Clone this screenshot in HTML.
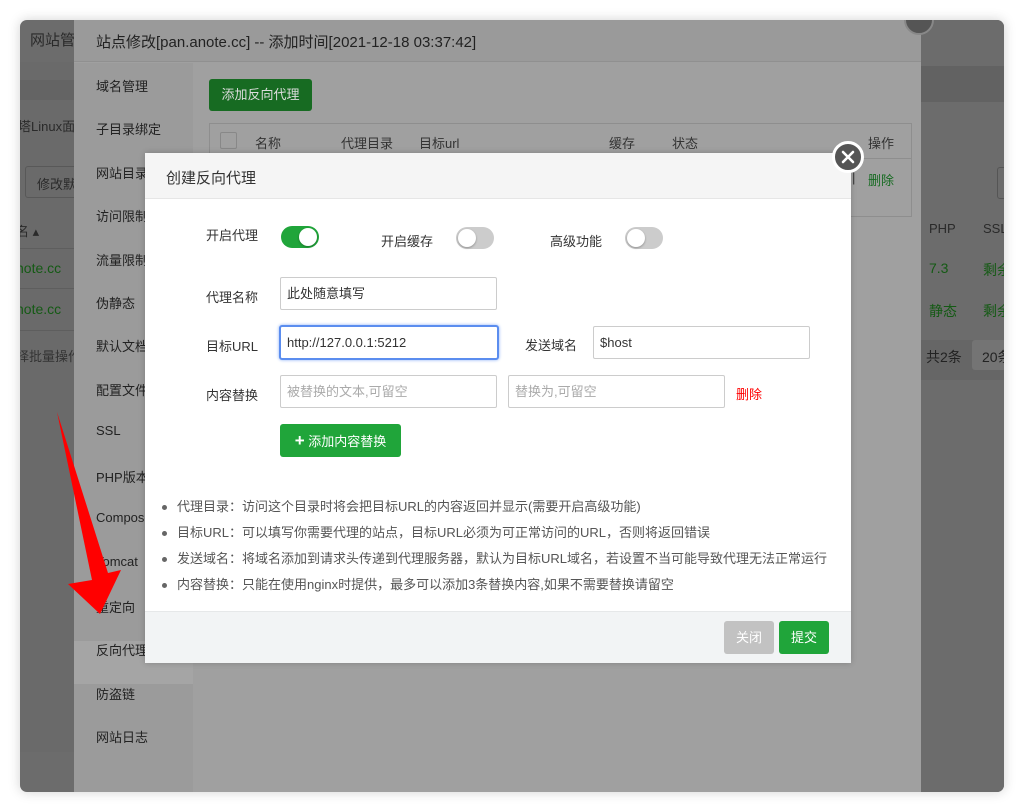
<!DOCTYPE html>
<html><head><meta charset="utf-8"><style>
*{box-sizing:border-box;margin:0;padding:0}
body{width:1024px;height:812px;background:#fff;position:relative;overflow:hidden;font-family:"Liberation Sans","Noto Sans CJK SC",sans-serif;font-size:13px;color:#333}
.abs{position:absolute}
.win{left:20px;top:20px;width:984px;height:772px;border-radius:7px;overflow:hidden;background:#6c6c6c;box-shadow:0 0 12px rgba(0,0,0,.18)}
.t{position:absolute;white-space:nowrap}
.inp{position:absolute;height:33px;border:1px solid #ccc;background:#fff;border-radius:2px;padding-left:6px;line-height:31px;font-size:13px;color:#333}
.lab{position:absolute;font-size:13px;color:#333;white-space:nowrap}
.sw{position:absolute;width:38px;height:22px;border-radius:11px;background:#ccc}
.sw i{position:absolute;top:2px;left:2px;width:18px;height:18px;border-radius:50%;background:#fff;box-shadow:0 1px 2px rgba(0,0,0,.3)}
.sw.on{background:#20a53a}.sw.on i{left:18px}
.btn{position:absolute;color:#fff;font-size:13px;text-align:center;border-radius:3px}
li{list-style:none;position:relative;padding-left:17px;height:26px;line-height:26px;font-size:13px;color:#555}
li:before{content:"";position:absolute;left:2px;top:11px;width:5px;height:5px;border-radius:50%;background:#666}
</style></head><body>
<div class="abs win">
  <div class="t" style="left:10px;top:9px;font-size:15px;color:#2a2a2a">网站管</div>
  <div class="abs" style="left:0;top:42px;width:54px;height:690px;background:#6a6a6a"></div>
  <div class="abs" style="left:0;top:60px;width:54px;height:20px;background:#646464"></div>
  <div class="t" style="left:-2px;top:96px;color:#2a2a2a;font-size:13px">塔Linux面</div>
  <div class="abs" style="left:5px;top:146px;width:60px;height:32px;border:1px solid #585858;border-radius:3px"></div>
  <div class="t" style="left:17px;top:154px;color:#2a2a2a">修改默</div>
  <div class="t" style="left:-4px;top:201px;color:#2a2a2a">名 ▴</div>
  <div class="abs" style="left:0;top:228px;width:54px;height:1px;background:#5e5e5e"></div>
  <div class="t" style="left:-4px;top:240px;color:#145a14;font-size:14px">note.cc</div>
  <div class="abs" style="left:0;top:268px;width:54px;height:1px;background:#5e5e5e"></div>
  <div class="t" style="left:-4px;top:281px;color:#145a14;font-size:14px">note.cc</div>
  <div class="abs" style="left:0;top:310px;width:54px;height:1px;background:#5e5e5e"></div>
  <div class="t" style="left:-4px;top:326px;color:#333">择批量操作</div>
  <div class="abs" style="left:901px;top:0;width:83px;height:772px;background:#6c6c6c"></div>
  <div class="abs" style="left:901px;top:46px;width:83px;height:36px;background:#626262"></div>
  <div class="t" style="left:909px;top:201px;color:#2a2a2a">PHP</div>
  <div class="t" style="left:963px;top:201px;color:#2a2a2a">SSL</div>
  <div class="t" style="left:909px;top:240px;color:#145a14;font-size:14px">7.3</div>
  <div class="t" style="left:963px;top:240px;color:#145a14;font-size:14px">剩余</div>
  <div class="t" style="left:909px;top:281px;color:#145a14;font-size:14px">静态</div>
  <div class="t" style="left:963px;top:281px;color:#145a14;font-size:14px">剩余</div>
  <div class="abs" style="left:977px;top:147px;width:10px;height:32px;border:1px solid #555;border-radius:3px"></div>
  <div class="abs" style="left:901px;top:320px;width:83px;height:40px;background:#666"></div>
  <div class="t" style="left:906px;top:327px;color:#222;font-size:14px">共2条</div>
  <div class="abs" style="left:952px;top:320px;width:40px;height:30px;background:#747474;border-radius:3px"></div>
  <div class="t" style="left:962px;top:327px;color:#222;font-size:14px">20条</div>
  <div class="abs" style="left:54px;top:0;width:847px;height:772px;background:#a0a0a0"></div>
  <div class="abs" style="left:54px;top:0;width:847px;height:42px;background:#9a9a9a;border-bottom:1px solid #909090"></div>
  <div class="t" style="left:76px;top:11px;font-size:15px;color:#222">站点修改[pan.anote.cc] -- 添加时间[2021-12-18 03:37:42]</div>
  <div class="abs" style="left:54px;top:43px;width:119px;height:729px;background:#9b9b9b"></div>
  <div class="abs" style="left:54px;top:621px;width:119px;height:43px;background:#a5a5a5"></div>
  <div class="t" style="left:76px;top:56px;color:#222">域名管理</div>
  <div class="t" style="left:76px;top:99px;color:#222">子目录绑定</div>
  <div class="t" style="left:76px;top:143px;color:#222">网站目录</div>
  <div class="t" style="left:76px;top:186px;color:#222">访问限制</div>
  <div class="t" style="left:76px;top:230px;color:#222">流量限制</div>
  <div class="t" style="left:76px;top:273px;color:#222">伪静态</div>
  <div class="t" style="left:76px;top:316px;color:#222">默认文档</div>
  <div class="t" style="left:76px;top:360px;color:#222">配置文件</div>
  <div class="t" style="left:76px;top:403px;color:#222">SSL</div>
  <div class="t" style="left:76px;top:447px;color:#222">PHP版本</div>
  <div class="t" style="left:76px;top:490px;color:#222">Composer</div>
  <div class="t" style="left:76px;top:534px;color:#222">Tomcat</div>
  <div class="t" style="left:76px;top:577px;color:#222">重定向</div>
  <div class="t" style="left:76px;top:620px;color:#222">反向代理</div>
  <div class="t" style="left:76px;top:664px;color:#222">防盗链</div>
  <div class="t" style="left:76px;top:707px;color:#222">网站日志</div>
  <div class="btn" style="left:189px;top:59px;width:103px;height:32px;line-height:32px;background:#176b22;color:#ddd">添加反向代理</div>
  <div class="abs" style="left:189px;top:103px;width:703px;height:94px;border:1px solid #8e8e8e"></div>
  <div class="abs" style="left:189px;top:138px;width:703px;height:1px;background:#8e8e8e"></div>
  <div class="abs" style="left:200px;top:112px;width:17px;height:17px;border:1px solid #888;border-radius:2px"></div>
  <div class="t" style="left:235px;top:113px;color:#333">名称</div>
  <div class="t" style="left:321px;top:113px;color:#333">代理目录</div>
  <div class="t" style="left:399px;top:113px;color:#333">目标url</div>
  <div class="t" style="left:589px;top:113px;color:#333">缓存</div>
  <div class="t" style="left:652px;top:113px;color:#333">状态</div>
  <div class="t" style="left:848px;top:113px;color:#333">操作</div>
  <div class="t" style="left:832px;top:150px;color:#333">|</div>
  <div class="t" style="left:848px;top:150px;color:#176b22">删除</div>
  <div class="abs" style="left:884px;top:-15px;width:30px;height:30px;border-radius:50%;background:#555;border:2px solid #888"></div>
</div>
<svg class="abs" style="left:0;top:0" width="1024" height="812"><polygon points="57,412 108,573 121,570 100,614 68,584 92,580" fill="#f00"/></svg>
<div class="abs" style="left:145px;top:153px;width:706px;height:510px;background:#fff;box-shadow:0 0 6px rgba(0,0,0,.2)">
  <div class="abs" style="left:0;top:0;width:706px;height:46px;background:#f5f5f5;border-bottom:1px solid #e6e6e6"></div>
  <div class="t" style="left:21px;top:14px;font-size:15px;color:#333">创建反向代理</div>
  <div class="lab" style="left:61px;top:72px">开启代理</div>
  <div class="sw on" style="left:136px;top:73px"><i></i></div>
  <div class="lab" style="left:236px;top:78px">开启缓存</div>
  <div class="sw" style="left:311px;top:74px"><i></i></div>
  <div class="lab" style="left:405px;top:78px">高级功能</div>
  <div class="sw" style="left:480px;top:74px"><i></i></div>
  <div class="lab" style="left:61px;top:134px">代理名称</div>
  <div class="inp" style="left:135px;top:124px;width:217px">此处随意填写</div>
  <div class="lab" style="left:61px;top:183px">目标URL</div>
  <div class="inp" style="left:134px;top:172px;width:220px;height:35px;border:2px solid #5b8def;border-radius:3px;box-shadow:0 0 3px #8ab0f5">http://127.0.0.1:5212</div>
  <div class="lab" style="left:380px;top:182px">发送域名</div>
  <div class="inp" style="left:448px;top:173px;width:217px">$host</div>
  <div class="lab" style="left:61px;top:232px">内容替换</div>
  <div class="inp" style="left:135px;top:222px;width:217px;color:#aaa">被替换的文本,可留空</div>
  <div class="inp" style="left:363px;top:222px;width:217px;color:#aaa">替换为,可留空</div>
  <div class="lab" style="left:591px;top:231px;color:#f00">删除</div>
  <div class="btn" style="left:135px;top:271px;width:121px;height:33px;line-height:33px;background:#20a53a"><b style="font-size:17px">+</b> 添加内容替换</div>
  <ul class="abs" style="left:15px;top:341px">
    <li>代理目录：访问这个目录时将会把目标URL的内容返回并显示(需要开启高级功能)</li>
    <li>目标URL：可以填写你需要代理的站点，目标URL必须为可正常访问的URL，否则将返回错误</li>
    <li>发送域名：将域名添加到请求头传递到代理服务器，默认为目标URL域名，若设置不当可能导致代理无法正常运行</li>
    <li>内容替换：只能在使用nginx时提供，最多可以添加3条替换内容,如果不需要替换请留空</li>
  </ul>
  <div class="abs" style="left:0;top:458px;width:706px;height:52px;background:#f2f4f5;border-top:1px solid #e6e8e9"></div>
  <div class="btn" style="left:579px;top:468px;width:50px;height:33px;line-height:33px;background:#c2c2c2">关闭</div>
  <div class="btn" style="left:634px;top:468px;width:50px;height:33px;line-height:33px;background:#20a53a">提交</div>
</div>
<svg class="abs" style="left:832px;top:141px" width="32" height="32"><circle cx="16" cy="16" r="14.5" fill="#555" stroke="#fff" stroke-width="3"/><path d="M11 11L21 21M21 11L11 21" stroke="#fff" stroke-width="2.6" stroke-linecap="round"/></svg>
</body></html>
